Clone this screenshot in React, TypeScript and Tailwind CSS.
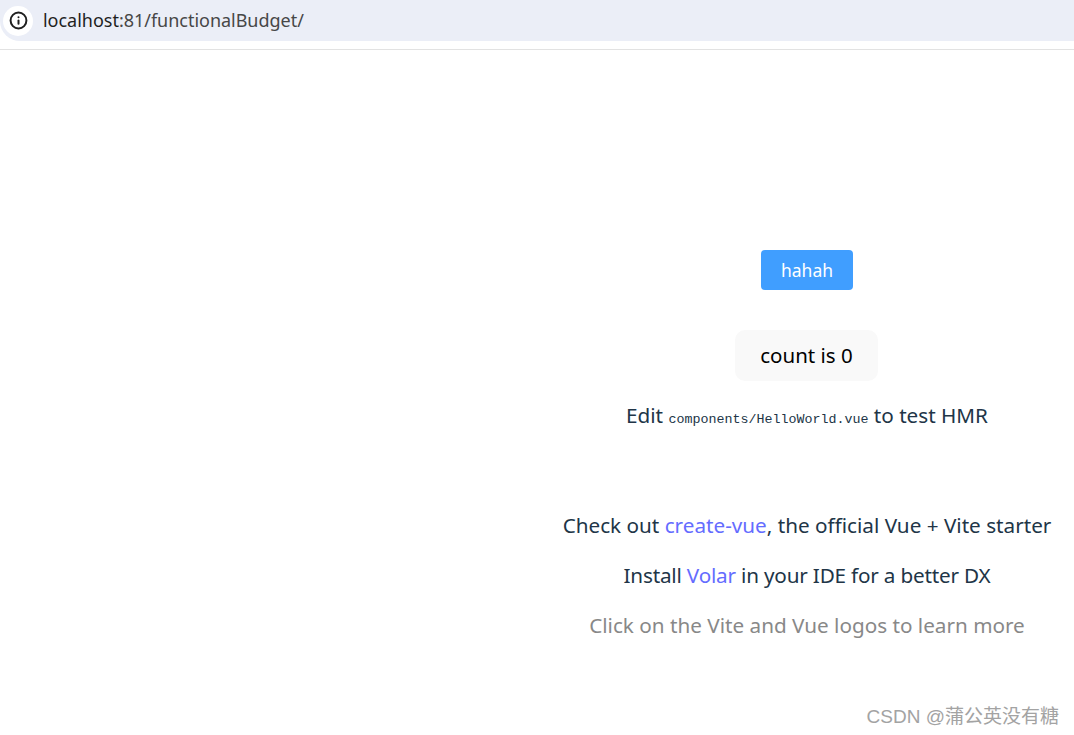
import { Info } from 'lucide-react';

export default function App() {
  return (
    <div className="h-[735px] relative overflow-hidden bg-white font-['Noto_Sans',sans-serif] text-[#213547]">
      {/* Browser address bar */}
      <div className="h-[50px] border-b border-[#e2e2e2]">
        <div className="h-[41px] bg-[#ebeef7] rounded-bl-[20px] flex items-center pl-[3px]">
          <div className="w-[30px] h-[30px] rounded-full bg-white flex items-center justify-center text-[#1f1f1f]">
            <Info className="w-[19px] h-[19px]" strokeWidth={2.5} />
          </div>
          <span className="ml-[10px] text-[18px] tracking-[-0.02px] text-[#1f1f1f]">
            localhost<span className="text-[#474747]">:81/functionalBudget/</span>
          </span>
        </div>
      </div>

      {/* Page body */}
      <div className="grid grid-cols-[540px_1fr]">
        <div />
        <div className="flex flex-col items-center pt-[200px] text-[20.7px]">
          <button className="w-[92px] h-[40px] rounded-[4px] bg-[#409eff] text-white text-[17.5px]">hahah</button>
          <button className="mt-[40px] mr-[1px] w-[143px] h-[51px] rounded-[10px] bg-[#f9f9f9] text-black text-[20.5px]">count is 0</button>
          <p className="mt-[18px] h-[32px] leading-[32px] whitespace-nowrap">
            Edit <code className="font-['Liberation_Mono',monospace] text-[13.33px]">components/HelloWorld.vue</code> to test HMR
          </p>
          <p className="mt-[78px] h-[32px] leading-[32px] whitespace-nowrap">
            Check out <a className="text-[#646cff]">create-vue</a>, the official Vue + Vite starter
          </p>
          <p className="mt-[18px] h-[32px] leading-[32px] whitespace-nowrap tracking-[-0.19px]">
            Install <a className="text-[#646cff]">Volar</a> in your IDE for a better DX
          </p>
          <p className="mt-[18px] h-[32px] leading-[32px] whitespace-nowrap text-[#888888]">
            Click on the Vite and Vue logos to learn more
          </p>
        </div>
      </div>

      {/* Watermark */}
      <div className="absolute right-[15px] top-[703px] text-[19px] text-[#a3a3a3] font-['Liberation_Sans','Noto_Sans_CJK_SC',sans-serif] whitespace-nowrap">
        CSDN @蒲公英没有糖
      </div>
    </div>
  );
}
